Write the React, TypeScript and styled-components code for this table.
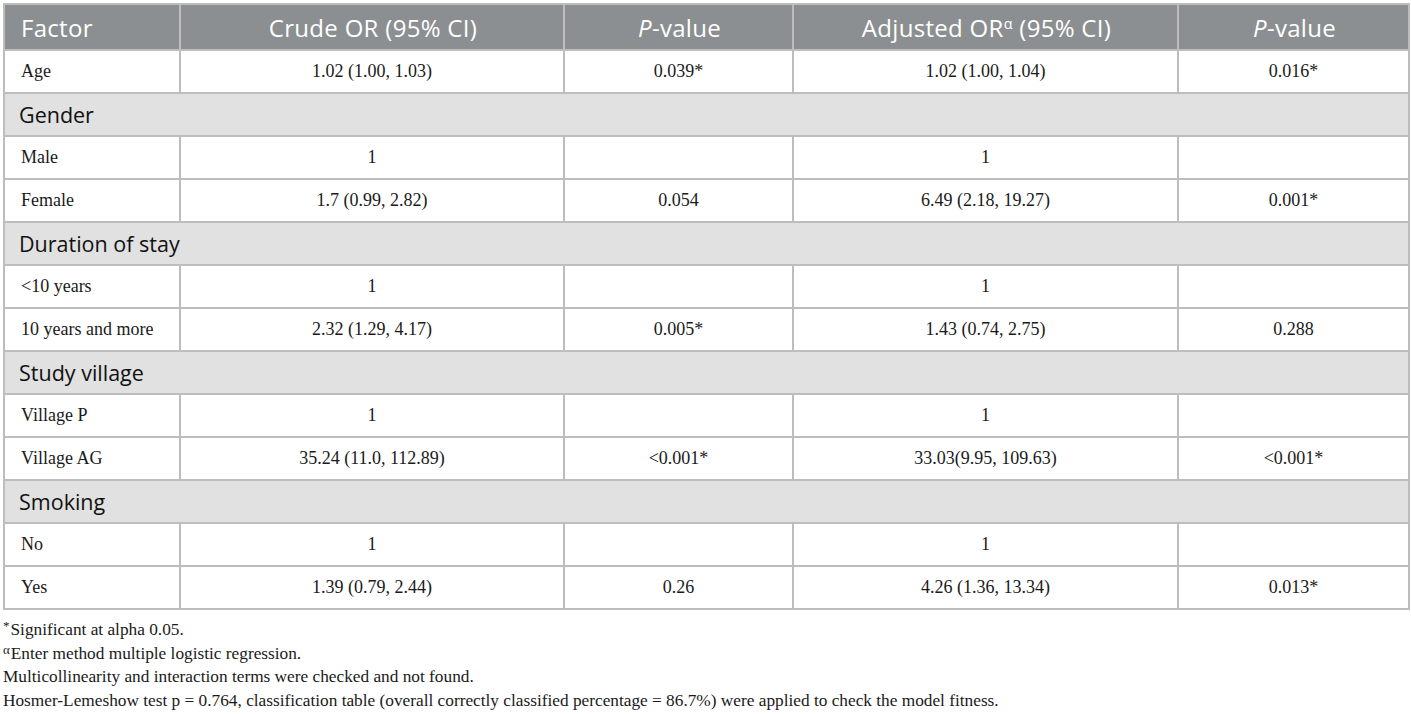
import React from "react";
import styled, { createGlobalStyle } from "styled-components";

const Global = createGlobalStyle`
  html, body { margin: 0; padding: 0; background: #ffffff; }
  body { padding: 3px 3px 0 3px; }
`;

const Table = styled.table`
  width: 1405px;
  border-collapse: collapse;
  table-layout: fixed;
  border: 2px solid #bcbdbc;
`;

const HeadCell = styled.th<{ $align?: string }>`
  background: #8b8f91;
  color: #ffffff;
  font-family: "Open Sans", "Lato", sans-serif;
  font-weight: 400;
  font-size: 24px;
  letter-spacing: 0.3px;
  height: 44px;
  padding: 0 14px 0 16px;
  text-align: ${(p) => p.$align || "center"};
  border-left: 2px solid #bcbdbc;
  border-right: 2px solid #bcbdbc;
  border-bottom: 2px solid #bcbdbc;
  white-space: nowrap;
`;

const Sup = styled.sup`
  font-size: 0.6em;
  vertical-align: 0.55em;
  line-height: 0;
`;

const SectionCell = styled.td`
  background: #e0e1e0;
  color: #111111;
  font-family: "Open Sans", "Lato", sans-serif;
  font-size: 21.5px;
  height: 41px;
  padding: 0 14px;
  border: 2px solid #bcbdbc;
`;

const Cell = styled.td<{ $align?: string }>`
  background: #ffffff;
  color: #1a1a1a;
  font-family: "Liberation Serif", "Times New Roman", serif;
  font-size: 18px;
  height: 41px;
  padding: 0 16px;
  text-align: ${(p) => p.$align || "center"};
  border: 2px solid #bcbdbc;
  white-space: nowrap;
`;

const Notes = styled.div`
  margin-top: 8px;
  font-family: "Liberation Serif", "Times New Roman", serif;
  font-size: 17.3px;
  color: #1a1a1a;
  line-height: 23.6px;
`;

const NoteSup = styled.sup`
  font-size: 0.75em;
  vertical-align: 0.35em;
  line-height: 0;
  margin-right: 1px;
`;

type Row =
  | { kind: "section"; label: string }
  | { kind: "data"; cells: [string, string, string, string, string] };

const rows: Row[] = [
  { kind: "data", cells: ["Age", "1.02 (1.00, 1.03)", "0.039*", "1.02 (1.00, 1.04)", "0.016*"] },
  { kind: "section", label: "Gender" },
  { kind: "data", cells: ["Male", "1", "", "1", ""] },
  { kind: "data", cells: ["Female", "1.7 (0.99, 2.82)", "0.054", "6.49 (2.18, 19.27)", "0.001*"] },
  { kind: "section", label: "Duration of stay" },
  { kind: "data", cells: ["<10 years", "1", "", "1", ""] },
  { kind: "data", cells: ["10 years and more", "2.32 (1.29, 4.17)", "0.005*", "1.43 (0.74, 2.75)", "0.288"] },
  { kind: "section", label: "Study village" },
  { kind: "data", cells: ["Village P", "1", "", "1", ""] },
  { kind: "data", cells: ["Village AG", "35.24 (11.0, 112.89)", "<0.001*", "33.03(9.95, 109.63)", "<0.001*"] },
  { kind: "section", label: "Smoking" },
  { kind: "data", cells: ["No", "1", "", "1", ""] },
  { kind: "data", cells: ["Yes", "1.39 (0.79, 2.44)", "0.26", "4.26 (1.36, 13.34)", "0.013*"] },
];

export default function App() {
  return (
    <>
      <Global />
      <Table>
        <colgroup>
          <col style={{ width: 176 }} />
          <col style={{ width: 384 }} />
          <col style={{ width: 229 }} />
          <col style={{ width: 385 }} />
          <col style={{ width: 231 }} />
        </colgroup>
        <thead>
          <tr>
            <HeadCell $align="left">Factor</HeadCell>
            <HeadCell>Crude OR (95% CI)</HeadCell>
            <HeadCell>
              <i>P</i>-value
            </HeadCell>
            <HeadCell>
              Adjusted OR<Sup>α</Sup> (95% CI)
            </HeadCell>
            <HeadCell>
              <i>P</i>-value
            </HeadCell>
          </tr>
        </thead>
        <tbody>
          {rows.map((r, i) =>
            r.kind === "section" ? (
              <tr key={i}>
                <SectionCell colSpan={5}>{r.label}</SectionCell>
              </tr>
            ) : (
              <tr key={i}>
                {r.cells.map((c, j) => (
                  <Cell key={j} $align={j === 0 ? "left" : "center"}>
                    {c}
                  </Cell>
                ))}
              </tr>
            )
          )}
        </tbody>
      </Table>
      <Notes>
        <div>
          <NoteSup>*</NoteSup>Significant at alpha 0.05.
        </div>
        <div>
          <NoteSup>α</NoteSup>Enter method multiple logistic regression.
        </div>
        <div>Multicollinearity and interaction terms were checked and not found.</div>
        <div>
          Hosmer-Lemeshow test p = 0.764, classification table (overall correctly classified percentage = 86.7%) were applied to check the model fitness.
        </div>
      </Notes>
    </>
  );
}
